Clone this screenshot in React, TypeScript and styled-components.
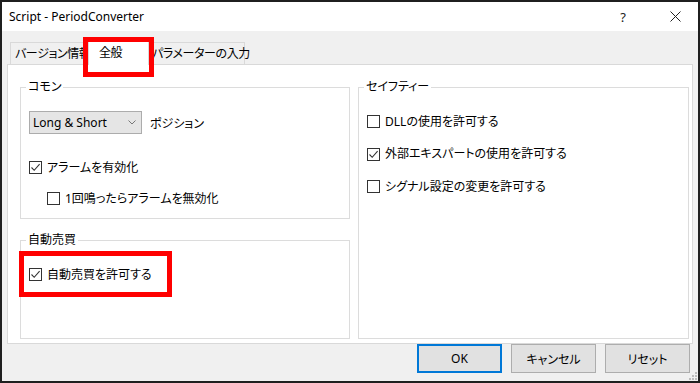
import React from "react";
import styled, { createGlobalStyle } from "styled-components";

const GlobalStyle = createGlobalStyle`
  html, body {
    margin: 0;
    padding: 0;
    background: #fff;
  }
  body {
    font-family: "Noto Sans", "Noto Sans CJK JP", sans-serif;
    font-size: 12px;
    color: #000;
  }
  * {
    box-sizing: border-box;
  }
`;

const Window = styled.div`
  position: relative;
  width: 700px;
  height: 383px;
  border: 2px solid #1f1f1f;
  background: #f0f0f0;
  display: flex;
  flex-direction: column;
  font-feature-settings: "palt" 1;
  overflow: hidden;
`;

const TitleBar = styled.div`
  height: 29px;
  flex: 0 0 auto;
  background: #fff;
  display: flex;
  align-items: center;
  padding-left: 7px;
`;

const TitleText = styled.div`
  font-size: 12px;
  line-height: 16px;
  color: #000;
`;

const TitleButtons = styled.div`
  margin-left: auto;
  display: flex;
  height: 100%;
`;

const TitleButton = styled.div<{ $gap?: number }>`
  width: 46px;
  height: 100%;
  display: flex;
  align-items: center;
  justify-content: center;
  margin-right: ${(p) => p.$gap ?? 0}px;
  font-size: 13px;
  color: #222;
`;

const Content = styled.div`
  flex: 1;
  display: flex;
  flex-direction: column;
  padding: 7px 5px 0 5px;
`;

const TabStrip = styled.div`
  display: flex;
  align-items: flex-end;
  height: 26px;
  padding-left: 3px;
`;

const Tab = styled.div<{ $width: number; $pad: number; $active?: boolean }>`
  position: relative;
  flex: 0 0 auto;
  width: ${(p) => p.$width}px;
  height: ${(p) => (p.$active ? 27 : 22)}px;
  margin: ${(p) => (p.$active ? "0 -2px -1px -2px" : "0")};
  padding-left: ${(p) => p.$pad}px;
  z-index: ${(p) => (p.$active ? 2 : 1)};
  background: ${(p) => (p.$active ? "#fff" : "#f0f0f0")};
  border: 1px solid #d9d9d9;
  border-bottom: none;
  display: flex;
  align-items: ${(p) => (p.$active ? "flex-start" : "center")};
  padding-top: ${(p) => (p.$active ? 6 : 0)}px;
  white-space: nowrap;
  letter-spacing: -0.4px;
  line-height: 16px;
`;

const Panel = styled.div`
  height: 280px;
  background: #fff;
  border: 1px solid #d9d9d9;
  display: grid;
  grid-template-columns: 330px 331px;
  column-gap: 8px;
  padding: 14px 2px 4px 12px;
`;

const Column = styled.div`
  display: flex;
  flex-direction: column;
  gap: 13px;
`;

const Group = styled.fieldset<{ $height?: number }>`
  margin: 0;
  min-width: 0;
  padding: 0 8px;
  border: 1px solid #dcdcdc;
  ${(p) => (p.$height ? `height: ${p.$height}px; flex: 0 0 auto;` : "flex: 1;")}
`;

const Legend = styled.legend`
  margin-left: -3px;
  padding: 0 2px;
  line-height: 16px;
  font-size: 12px;
`;

const GroupBody = styled.div<{ $top: number; $gap: number }>`
  display: flex;
  flex-direction: column;
  align-items: flex-start;
  padding-top: ${(p) => p.$top}px;
  gap: ${(p) => p.$gap}px;
`;

const SelectRow = styled.div`
  display: flex;
  align-items: center;
  gap: 8px;
  margin-bottom: 11px;
`;

const Select = styled.div`
  width: 113px;
  height: 23px;
  background: #e5e5e5;
  border: 1px solid #acacac;
  display: flex;
  align-items: center;
  justify-content: space-between;
  padding: 0 5px 0 3px;
  font-size: 12px;
`;

const CheckRow = styled.label<{ $indent?: number }>`
  display: flex;
  align-items: center;
  height: 17px;
  margin-left: ${(p) => p.$indent ?? 0}px;
  gap: 5px;
  line-height: 16px;
  white-space: nowrap;
`;

const Box = styled.span`
  width: 13px;
  height: 13px;
  border: 1px solid #333;
  background: #fff;
  display: flex;
  align-items: center;
  justify-content: center;
`;

const ButtonRow = styled.div`
  display: flex;
  justify-content: flex-end;
  gap: 9px;
  margin-right: 3px;
`;

const Button = styled.div<{ $primary?: boolean }>`
  width: 85px;
  height: 29px;
  background: #e1e1e1;
  border: ${(p) => (p.$primary ? "2px solid #0078d7" : "1px solid #adadad")};
  display: flex;
  align-items: center;
  justify-content: center;
  font-size: 12px;
`;

const Grip = styled.svg`
  position: absolute;
  right: 1px;
  bottom: 1px;
`;

const Highlight = styled.div<{ $x: number; $y: number; $w: number; $h: number }>`
  position: absolute;
  left: ${(p) => p.$x}px;
  top: ${(p) => p.$y}px;
  width: ${(p) => p.$w}px;
  height: ${(p) => p.$h}px;
  border: 5px solid #ff0000;
  z-index: 10;
  pointer-events: none;
`;

const Check: React.FC<{ checked?: boolean; label: string; indent?: number }> = ({
  checked,
  label,
  indent,
}) => (
  <CheckRow $indent={indent}>
    <Box>
      {checked && (
        <svg width="11" height="11" viewBox="0 0 11 11">
          <path d="M1.5 5.5 L4.2 8.3 L9.6 2.2" fill="none" stroke="#333" strokeWidth="1.1" />
        </svg>
      )}
    </Box>
    {label}
  </CheckRow>
);

const App: React.FC = () => {
  return (
    <>
      <GlobalStyle />
      <Window>
        <TitleBar>
          <TitleText>Script - PeriodConverter</TitleText>
          <TitleButtons>
            <TitleButton $gap={6}>?</TitleButton>
            <TitleButton>
              <svg width="11" height="11" viewBox="0 0 11 11">
                <path d="M0.5 0.5 L10.5 10.5 M10.5 0.5 L0.5 10.5" stroke="#222" strokeWidth="1" />
              </svg>
            </TitleButton>
          </TitleButtons>
        </TitleBar>
        <Content>
          <TabStrip>
            <Tab $width={80} $pad={4}>バージョン情報</Tab>
            <Tab $width={61} $pad={10} $active>全般</Tab>
            <Tab $width={98} $pad={4}>パラメーターの入力</Tab>
          </TabStrip>
          <Panel>
            <Column>
              <Group $height={140}>
                <Legend>コモン</Legend>
                <GroupBody $top={16} $gap={14}>
                  <SelectRow>
                    <Select>
                      <span>Long &amp; Short</span>
                      <svg width="8" height="5" viewBox="0 0 8 5">
                        <path d="M0.5 0.5 L4 4 L7.5 0.5" fill="none" stroke="#777" strokeWidth="1" />
                      </svg>
                    </Select>
                    <span>ポジション</span>
                  </SelectRow>
                  <Check checked label="アラームを有効化" />
                  <Check indent={18} label="1回鳴ったらアラームを無効化" />
                </GroupBody>
              </Group>
              <Group>
                <Legend>自動売買</Legend>
                <GroupBody $top={18} $gap={0}>
                  <Check checked label="自動売買を許可する" />
                </GroupBody>
              </Group>
            </Column>
            <Column>
              <Group>
                <Legend>セイフティー</Legend>
                <GroupBody $top={18} $gap={15.5}>
                  <Check label="DLLの使用を許可する" />
                  <Check checked label="外部エキスパートの使用を許可する" />
                  <Check label="シグナル設定の変更を許可する" />
                </GroupBody>
              </Group>
            </Column>
          </Panel>
          <ButtonRow>
            <Button $primary>OK</Button>
            <Button>キャンセル</Button>
            <Button>リセット</Button>
          </ButtonRow>
        </Content>
        <Grip width="8" height="8" viewBox="0 0 8 8">
          <g fill="#bcbcbc">
            <rect x="6" y="0" width="2" height="2" />
            <rect x="3" y="3" width="2" height="2" />
            <rect x="6" y="3" width="2" height="2" />
            <rect x="0" y="6" width="2" height="2" />
            <rect x="3" y="6" width="2" height="2" />
            <rect x="6" y="6" width="2" height="2" />
          </g>
        </Grip>
        <Highlight $x={81} $y={35} $w={71} $h={40} />
        <Highlight $x={17} $y={249} $w={153} $h={46} />
      </Window>
    </>
  );
};

export default App;
